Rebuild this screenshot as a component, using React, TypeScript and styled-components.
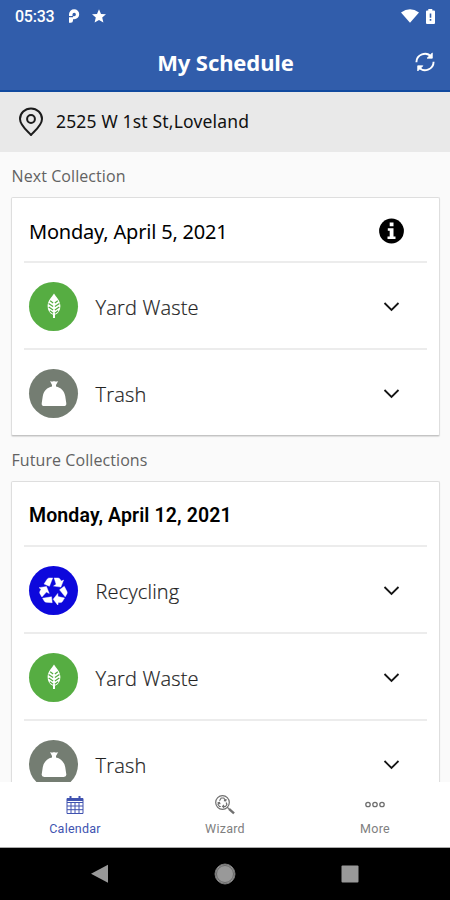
import React from "react";
import styled, { createGlobalStyle } from "styled-components";

const GlobalStyle = createGlobalStyle`
  * { box-sizing: border-box; }
  body { margin: 0; background: #fafafa; }
`;

const Screen = styled.div`
  width: 450px;
  height: 900px;
  display: flex;
  flex-direction: column;
  overflow: hidden;
  background: #fafafa;
  font-family: "Open Sans", "Noto Sans", sans-serif;
  color: #000;
`;

const Header = styled.header`
  flex: none;
  height: 92px;
  background: #315dab;
  border-bottom: 2px solid #114a9f;
  color: #fff;
`;

const StatusBar = styled.div`
  height: 32px;
  padding: 0 14px 0 15px;
  display: flex;
  align-items: center;
`;

const Clock = styled.span`
  width: 53px;
  font: 500 16px/32px Roboto, sans-serif;
  letter-spacing: -0.25px;
  padding-top: 1px;
`;

const StatusIcons = styled.div<{ $end?: boolean }>`
  display: flex;
  align-items: center;
  gap: ${(p) => (p.$end ? "6px" : "12px")};
  margin-left: ${(p) => (p.$end ? "auto" : "0")};
`;

const TitleBar = styled.div`
  height: 59px;
  padding-right: 15px;
  display: grid;
  grid-template-columns: 35px 1fr 20px;
  align-items: center;
`;

const Title = styled.h1`
  margin: 0;
  padding-left: 1px;
  text-align: center;
  font: 700 22px/58px "Noto Sans", sans-serif;
  letter-spacing: -0.1px;
`;

const AddressBar = styled.div`
  flex: none;
  height: 60px;
  padding: 0 0 0 18px;
  display: flex;
  align-items: center;
  gap: 12px;
  background: #e9e9e9;
  font: 400 17.5px/24px "Noto Sans", sans-serif;
  color: #111;
`;

const AddressText = styled.span`
  padding-bottom: 3px;
  letter-spacing: 0.17px;
`;

const Content = styled.main`
  flex: 1;
  min-height: 0;
  overflow: hidden;
  padding: 0 10px 0 11px;
`;

const SectionLabel = styled.h2`
  margin: 0;
  padding-left: 0.5px;
  height: 45px;
  font-weight: 400;
  font-size: 16px;
  line-height: 48px;
  letter-spacing: 0.08px;
  color: #626262;
`;

const Card = styled.section`
  height: 239px;
  padding: 0 12px;
  background: #fff;
  border: 1px solid #dedede;
  border-bottom-color: #c4c4c4;
  border-radius: 2px;
  box-shadow: 0 1px 1px #ddd;
`;

const TallCard = styled(Card)`
  height: 326px;
`;

const DateRow = styled.div`
  height: 63px;
  padding: 2px 22px 0 5px;
  display: flex;
  align-items: center;
  justify-content: space-between;
`;

const DateText = styled.span<{ $bold?: boolean }>`
  font-family: ${(p) => (p.$bold ? "Roboto" : '"Noto Sans"')}, sans-serif;
  font-weight: ${(p) => (p.$bold ? 600 : 400)};
  font-size: ${(p) => (p.$bold ? "19.5px" : "20px")};
  line-height: 28px;
  letter-spacing: ${(p) => (p.$bold ? "0.12px" : "-0.2px")};
  padding-top: ${(p) => (p.$bold ? "3px" : "2px")};
`;

const Row = styled.div`
  height: 87px;
  border-top: 2px solid #ececec;
  padding: 1px 27px 0 5px;
  display: grid;
  grid-template-columns: 49px 1fr 17px;
  column-gap: 17.5px;
  align-items: center;
`;

const RowLabel = styled.span`
  font-size: 20px;
  line-height: 28px;
  font-weight: 300;
  letter-spacing: 0.18px;
  padding-top: 3px;
  -webkit-text-stroke: 0.2px #222;
  color: #222;
`;

const Disc = styled.div<{ $color: string }>`
  width: 49px;
  height: 49px;
  border-radius: 50%;
  display: grid;
  place-items: center;
  background: ${(p) => p.$color};
  color: #fff;
`;

const TabBar = styled.nav`
  flex: none;
  height: 66px;
  display: grid;
  grid-template-columns: repeat(3, 1fr);
  background: #fff;
  border-bottom: 1px solid #aaa;
`;

const Tab = styled.div<{ $active?: boolean }>`
  display: flex;
  flex-direction: column;
  align-items: center;
  padding: 13px 0 0;
  gap: 4px;
  color: ${(p) => (p.$active ? "#4053b0" : "#808080")};
  font: 400 12.5px/20px Roboto, sans-serif;
  letter-spacing: 0.25px;
`;

const SystemBar = styled.footer`
  flex: none;
  height: 52px;
  background: #000;
  display: flex;
  align-items: center;
  justify-content: space-between;
  padding: 0 91px 0 90px;
`;

const Chevron = () => (
  <svg width="17" height="14" viewBox="0 0 17 14" fill="none" stroke="#151515" strokeWidth="1.8">
    <path d="M1.5 4 L8.500 11 L15.500 4" />
  </svg>
);

const Leaf = () => (
  <svg width="16" height="28" viewBox="0 0 16 28" fill="none">
    <path d="M8 1.5C6 5 1.6 8.5 1.6 14c0 4.500 2 7.300 5.400 8.700V26h2v-3.300c3.400-1.400 5.400-4.200 5.400-8.700C14.400 8.500 10 5 8 1.500Z" fill="#fff" />
    <path d="M7.100 11 4.200 8.700M7.100 14.500 2.600 11.400M7.100 18 2.700 15M7.100 21.200 3.800 18.700M8.900 11l2.900-2.300M8.900 14.500l4.500-3.100M8.900 18l4.400-3M8.900 21.200l3.300-2.500" stroke="#56ad42" strokeWidth="1.25" />
  </svg>
);

const Bag = () => (
  <svg width="26" height="28" viewBox="0 0 26 28" fill="#fff">
    <path d="M9 2q2 1 4 0 2 1 4.200 0L15 6v1.500c4.800.8 8.300 4.700 9.200 9.500l1.100 7.200q.4 2.800-2.500 2.800H3.200Q.3 27 .7 24.200L1.800 17C2.700 12.200 6.200 8.300 11 7.500V6Z" />
  </svg>
);

const RecycleIcon = () => (
  <svg width="29" height="29" viewBox="-15 -15.500 30 30" fill="#fff" stroke="#fff" strokeWidth="0.400" strokeLinejoin="round">
    {[0, 120, 240].map((angle) => (
      <path
        key={angle}
        transform={`rotate(${angle})`}
        d="M-9.800-7.200-6.400-12.400Q-5.600-13.500-4.200-13.500H-.8L-4.200-4.800ZM.6-13.500H4.600Q6-13.500 6.800-12.200L8-10.200l2.500-1.100L7.600-4 0-5.100l2.700-1.800Z"
      />
    ))}
  </svg>
);

const kinds = {
  yard: { label: "Yard Waste", color: "#56ad42", icon: <Leaf /> },
  trash: { label: "Trash", color: "#747d72", icon: <Bag /> },
  recycling: { label: "Recycling", color: "#0d08dc", icon: <RecycleIcon /> },
};

const Collection = ({ kind }: { kind: keyof typeof kinds }) => (
  <Row>
    <Disc $color={kinds[kind].color}>{kinds[kind].icon}</Disc>
    <RowLabel>{kinds[kind].label}</RowLabel>
    <Chevron />
  </Row>
);

const InfoIcon = () => (
  <svg width="26" height="26" viewBox="0 0 26 26">
    <circle cx="12.500" cy="13" r="12.400" fill="#000" />
    <path d="M10.700 4.600h3.800v3.700h-3.800ZM8.800 10.200H14.500v8.200h2v2.500H8.500v-2.500h2.200v-5.700H8.800Z" fill="#fff" />
  </svg>
);

const SyncIcon = () => (
  <svg width="20" height="22" viewBox="0 0 20 22" fill="none" stroke="#fff" strokeWidth="1.900">
    <path d="M1.400 11.300A8.500 8.500 0 0 1 16.300 5.800M18.600 10.700A8.500 8.500 0 0 1 3.700 16.200" />
    <path d="M17.300 2v5.200h-5.200ZM2.700 20v-5.200h5.200Z" fill="#fff" strokeWidth="0.800" />
  </svg>
);

const PinIcon = () => (
  <svg width="26" height="30" viewBox="0 0 26 30" fill="none" stroke="#1c1c1c" strokeWidth="2">
    <path d="M13 28C10 24.500 2 18.500 2 12a11 10.500 0 0 1 22 0c0 6.500-8 12.500-11 16Z" strokeLinejoin="round" />
    <circle cx="13" cy="12" r="3.900" />
  </svg>
);

const CalendarIcon = () => (
  <svg width="18" height="20" viewBox="0 0 18 20" fill="none" stroke="#4053b0">
    <path d="M1 3.500h16v15H1Z M1 7.500h16M1 11h16M1 14.700h16M5 7v11.500M9 7v11.500M13 7v11.500" />
    <path d="M1 4.500h16" strokeWidth="3" />
    <path d="M4.500 1v3M13.500 1v3" strokeWidth="2" />
  </svg>
);

const WizardIcon = () => (
  <svg width="22" height="20" viewBox="0 0 22 20" fill="none" stroke="#707070" strokeWidth="1.200">
    <circle cx="8.500" cy="7.500" r="6.800" />
    <path d="M5.500 5.800 7.200 3h2.600l1.700 2.800M9.900 5.600l1.800.3.500-1.800M12.200 7.500l.7 2.200-1.400 1.800H9M10 9.900l-1.400 1.600 1.600 1.300M6.800 11.500H5.500L4 9.500l1.200-2.100M3.600 7.800l1.800-.4.700 1.800" />
    <path d="m13.300 12.300 1.500 1.400" />
    <path d="m15 13.800 5 4.600" strokeWidth="2.400" />
  </svg>
);

const MoreIcon = () => (
  <svg width="22" height="20" viewBox="0 0 22 20" fill="none" stroke="#707070" strokeWidth="1.300">
    <circle cx="4" cy="9.500" r="2.200" />
    <circle cx="11" cy="9.500" r="2.200" />
    <circle cx="18" cy="9.500" r="2.200" />
  </svg>
);

export default function App() {
  return (
    <Screen>
      <GlobalStyle />
      <Header>
        <StatusBar>
          <Clock>05:33</Clock>
          <StatusIcons>
            <svg width="12" height="14" viewBox="0 0 12 14">
              <path
                fillRule="evenodd"
                fill="#fff"
                d="M6.200.3a5 5 0 0 1 0 10H5V11.500Q5 13.700 2.800 13.700H1V7H4.500V5.500A1.700 1.700 0 1 1 6.200 7.200H5V8.300H1V5.300A5.100 5 0 0 1 6.200.3Z"
              />
            </svg>
            <svg width="14" height="14" viewBox="0 0 14 14" fill="#fff">
              <path d="m7 .2 2 4.700 5 .4-3.800 3.300 1.200 5L7 11l-4.400 2.600 1.200-5L0 5.300l5-.4Z" />
            </svg>
          </StatusIcons>
          <StatusIcons $end>
            <svg width="18" height="14" viewBox="0 0 18 14" fill="#fff">
              <path d="M0 3.500Q9-3 18 3.500L9 13.800Z" />
            </svg>
            <svg width="11" height="17" viewBox="0 0 11 17">
              <path d="M3.300 1h4v1.500H9q1 0 1 1V15q0 1-1 1H2q-1 0-1-1V3.500q0-1 1-1h1.300Z" fill="#fff" />
              <path d="M5.500 5.500v4.200M5.500 11v1.800" stroke="#315dab" strokeWidth="1.600" />
            </svg>
          </StatusIcons>
        </StatusBar>
        <TitleBar>
          <span />
          <Title>My Schedule</Title>
          <SyncIcon />
        </TitleBar>
      </Header>
      <AddressBar>
        <PinIcon />
        <AddressText>2525 W 1st St,Loveland</AddressText>
      </AddressBar>
      <Content>
        <SectionLabel>Next Collection</SectionLabel>
        <Card>
          <DateRow>
            <DateText>Monday, April 5, 2021</DateText>
            <InfoIcon />
          </DateRow>
          <Collection kind="yard" />
          <Collection kind="trash" />
        </Card>
        <SectionLabel>Future Collections</SectionLabel>
        <TallCard>
          <DateRow>
            <DateText $bold>Monday, April 12, 2021</DateText>
          </DateRow>
          <Collection kind="recycling" />
          <Collection kind="yard" />
          <Collection kind="trash" />
        </TallCard>
      </Content>
      <TabBar>
        <Tab $active><CalendarIcon />Calendar</Tab>
        <Tab><WizardIcon />Wizard</Tab>
        <Tab><MoreIcon />More</Tab>
      </TabBar>
      <SystemBar>
        <svg width="18" height="20" viewBox="0 0 18 20"><path d="M18 .8v18L1 9.800Z" fill="#999" /></svg>
        <svg width="22" height="22" viewBox="0 0 22 22">
          <circle cx="11" cy="11" r="10" fill="#999" stroke="#777" />
          <circle cx="11" cy="11" r="8.500" fill="none" stroke="#555" strokeWidth=".7" />
        </svg>
        <svg width="18" height="18" viewBox="0 0 18 18"><rect x=".5" y=".5" width="17" height="17" rx="1" fill="#999" /></svg>
      </SystemBar>
    </Screen>
  );
}
